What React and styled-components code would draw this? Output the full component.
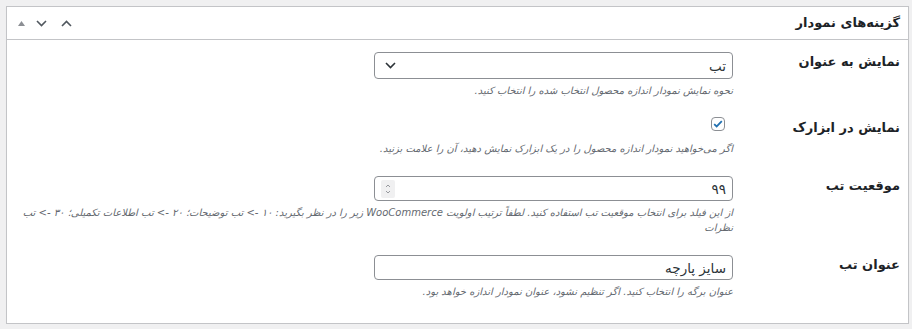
import React from 'react'
import styled, { createGlobalStyle } from 'styled-components'

const GlobalStyle = createGlobalStyle`
    html, body {
        margin: 0;
        padding: 0;
        background: #f0f0f1;
    }
    body {
        direction: rtl;
        font-family: "DejaVu Sans", "Noto Sans", sans-serif;
        color: #1d2327;
    }
`

const Panel = styled.section`
    margin: 6px 3px 0 6px;
    background: #fff;
    border: 1px solid #c3c4c7;
    box-shadow: 0 1px 1px rgba(0, 0, 0, 0.04);
`

const PanelHeader = styled.header`
    display: flex;
    align-items: center;
    justify-content: space-between;
    height: 32px;
    padding: 0 8px 0 7px;
    border-bottom: 1px solid #c3c4c7;
`

const Title = styled.h2`
    margin: 0;
    font-size: 13px;
    font-weight: 700;
    line-height: 1.4;
`

const Handles = styled.div`
    display: flex;
    align-items: center;
`

const Handle = styled.span`
    display: flex;
    align-items: center;
    justify-content: center;
    width: ${p => p.$w || 25}px;
    height: 20px;
    color: ${p => (p.$muted ? '#8c8f94' : '#50575e')};
`

const PanelBody = styled.div`
    padding: 2px 8px 14px 7px;
`

const Row = styled.div`
    display: grid;
    grid-template-columns: 167px 1fr;
    padding: 10px 0;
`

const Label = styled.label`
    font-size: 13px;
    font-weight: 700;
    line-height: 20px;
`

const Field = styled.div`
    display: flex;
    flex-direction: column;
    align-items: flex-start;
`

const Control = styled.div`
    display: flex;
    align-items: center;
    justify-content: space-between;
    box-sizing: border-box;
    width: 359px;
    height: ${p => p.$h || 26}px;
    padding: 0 6px 0 10px;
    border: 1px solid #8c8f94;
    border-radius: 4px;
    background: #fff;
    font-size: 13.5px;
    color: #2c3338;
`

const Spinner = styled.span`
    display: flex;
    flex-direction: column;
    align-items: center;
    justify-content: center;
    width: 14px;
    height: 18px;
    margin-left: -4px;
    background: #f0f0f1;
    border-radius: 2px;
    color: #8c8f94;
`

const CheckWrap = styled.div`
    display: flex;
    align-items: flex-start;
    height: 20px;
    margin-top: -1px;
    padding-right: 8px;
`

const Checkbox = styled.span`
    display: flex;
    align-items: center;
    justify-content: center;
    box-sizing: border-box;
    width: 14px;
    height: 14px;
    border: 1px solid #8c8f94;
    border-radius: 4px;
    background: #fff;
    color: #2271b1;
`

const Description = styled.p`
    margin: 4px 0 0;
    font-size: 10px;
    font-style: italic;
    line-height: 15px;
    color: #646970;
`

const Chevron = ({ up }) => (
    <svg width="11" height="7" viewBox="0 0 11 7" fill="none">
        <path d={up ? 'M1 6 L5.5 1.5 L10 6' : 'M1 1 L5.5 5.5 L10 1'} stroke="currentColor" strokeWidth="1.6" />
    </svg>
)

const rows = [
    {
        label: 'نمایش به عنوان',
        kind: 'select',
        value: 'تب',
        desc: 'نحوه نمایش نمودار اندازه محصول انتخاب شده را انتخاب کنید.',
    },
    {
        label: 'نمایش در ابزارک',
        kind: 'check',
        desc: 'اگر می‌خواهید نمودار اندازه محصول را در یک ابزارک نمایش دهید، آن را علامت بزنید.',
    },
    {
        label: 'موقعیت تب',
        kind: 'number',
        value: '۹۹',
        desc: 'از این فیلد برای انتخاب موقعیت تب استفاده کنید. لطفاً ترتیب اولویت WooCommerce زیر را در نظر بگیرید: ۱۰ -> تب توضیحات؛ ۲۰ -> تب اطلاعات تکمیلی؛ ۳۰ -> تب نظرات',
    },
    {
        label: 'عنوان تب',
        kind: 'text',
        value: 'سایز پارچه',
        desc: 'عنوان برگه را انتخاب کنید. اگر تنظیم نشود، عنوان نمودار اندازه خواهد بود.',
    },
]

function Input({ row }) {
    if (row.kind === 'check') {
        return (
            <CheckWrap>
                <Checkbox>
                    <svg width="10" height="8" viewBox="0 0 11 9" fill="none">
                        <path d="M1.2 4.6 L4 7.3 L9.8 1.4" stroke="currentColor" strokeWidth="2" />
                    </svg>
                </Checkbox>
            </CheckWrap>
        )
    }
    return (
        <Control $h={row.kind === 'select' ? 27 : 25}>
            <span>{row.value}</span>
            {row.kind === 'select' && <Chevron />}
            {row.kind === 'number' && (
                <Spinner>
                    <svg width="6" height="12" viewBox="0 0 6 12" fill="none">
                        <path d="M1 4 L3 2 L5 4 M1 8 L3 10 L5 8" stroke="currentColor" strokeWidth="0.9" />
                    </svg>
                </Spinner>
            )}
        </Control>
    )
}

export default function App() {
    return (
        <>
            <GlobalStyle />
            <Panel>
                <PanelHeader>
                    <Title>گزینه‌های نمودار</Title>
                    <Handles>
                        <Handle><Chevron up /></Handle>
                        <Handle><Chevron /></Handle>
                        <Handle $w={15} $muted>
                            <svg width="7" height="5" viewBox="0 0 7 5">
                                <path d="M0 5 L3.5 0 L7 5 Z" fill="currentColor" />
                            </svg>
                        </Handle>
                    </Handles>
                </PanelHeader>
                <PanelBody>
                    {rows.map(row => (
                        <Row key={row.label}>
                            <Label>{row.label}</Label>
                            <Field>
                                <Input row={row} />
                                <Description>{row.desc}</Description>
                            </Field>
                        </Row>
                    ))}
                </PanelBody>
            </Panel>
        </>
    )
}
